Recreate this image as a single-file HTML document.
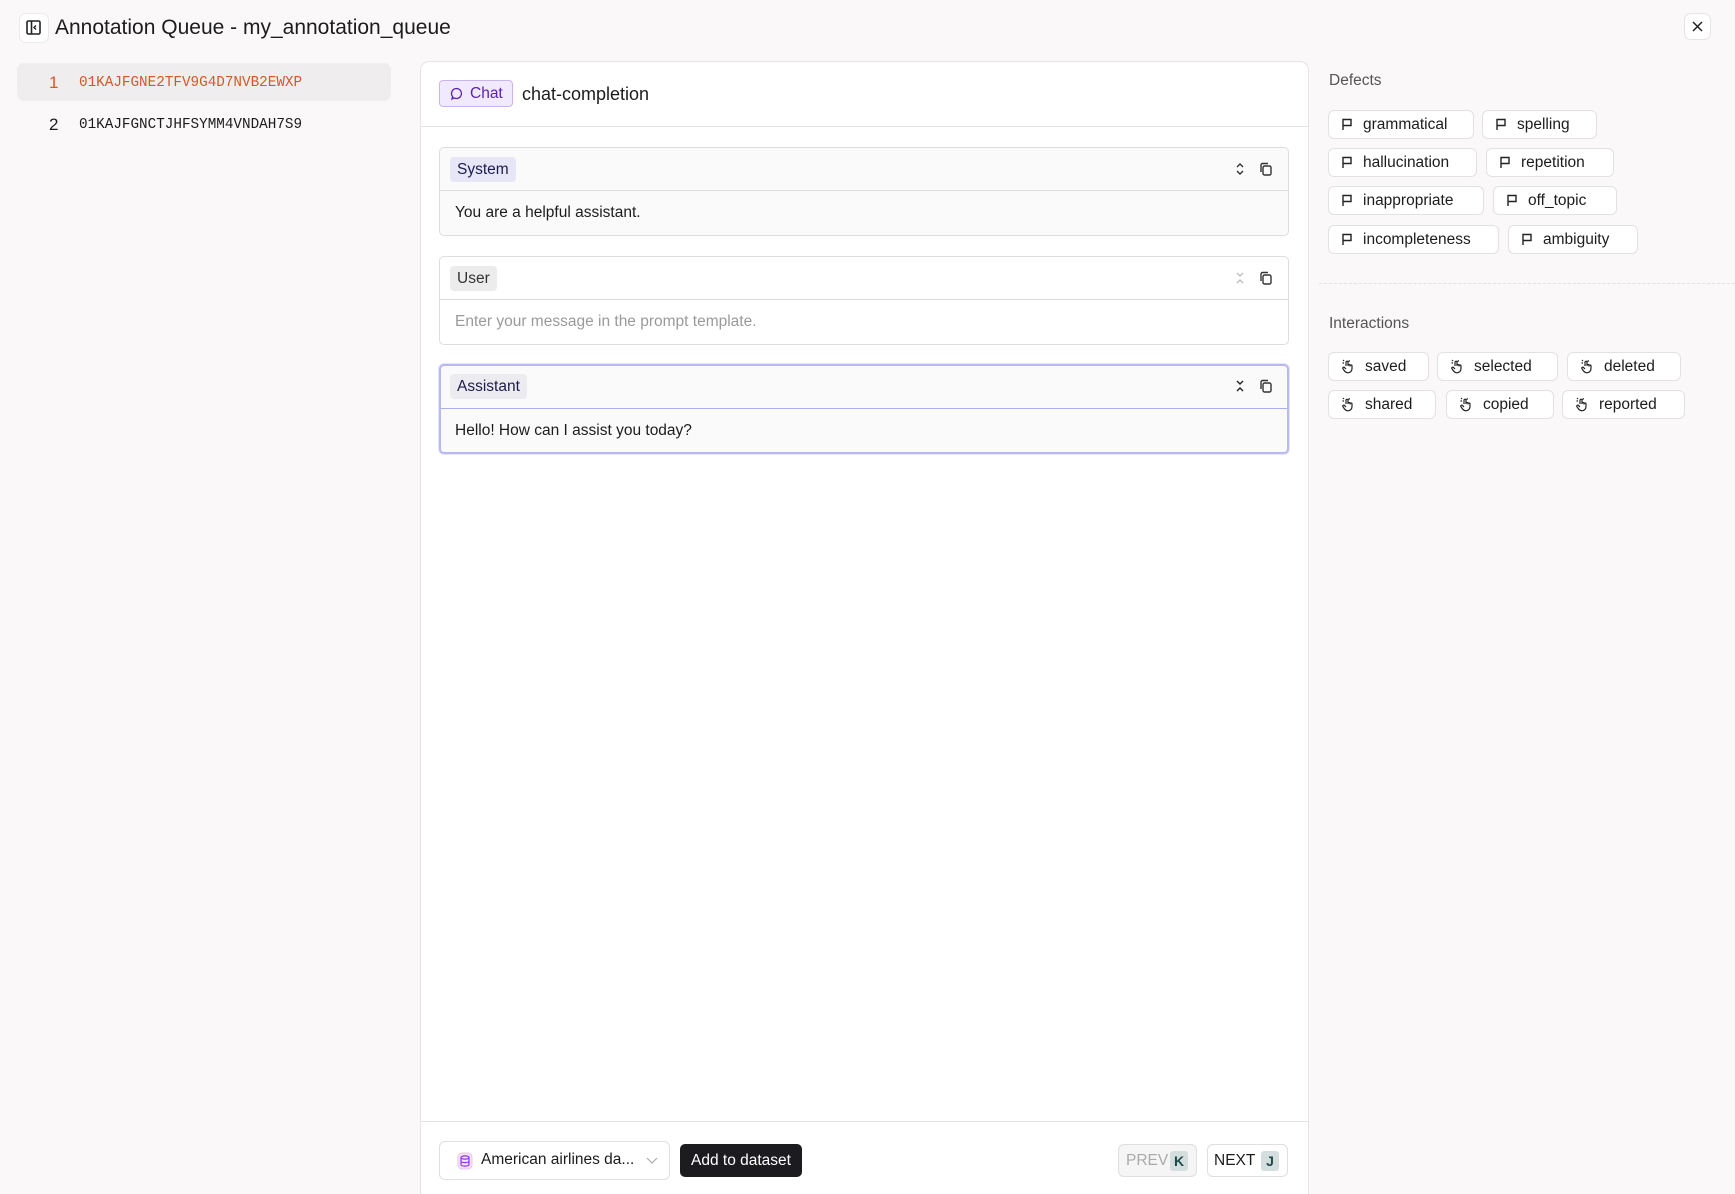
<!DOCTYPE html>
<html style="overflow:hidden;height:1194px"><head><meta charset="utf-8"><style>
*{box-sizing:border-box;margin:0;padding:0}
body{width:1735px;height:1194px;background:#faf8f8;font-family:"Liberation Sans",sans-serif;color:#1c1c1e;position:relative;overflow:hidden}
.a{position:absolute}
.chip{position:absolute;height:29px;border:1px solid #e3e1e1;border-radius:6px;background:#fff;font-size:15.5px;display:flex;align-items:center;padding-left:12px;gap:10px;color:#1c1c1e}
.blk{position:absolute;left:439px;width:850px;border:1px solid #dedcdc;border-radius:5px;background:#fafafa}
.bh{height:43px;border-bottom:1px solid #dedcdc;position:relative}
.tag{position:absolute;left:10px;top:9px;height:25px;padding:0 7px;border-radius:4px;font-size:15.5px;line-height:25px}
.bb{padding-left:15px;font-size:15.5px;line-height:44px}
.ic2{position:absolute;top:14px}
</style></head><body>

<div class="a" style="left:19px;top:13px;width:30px;height:30px;border:1px solid #eceaea;border-radius:7px;background:#fff"></div>
<svg class="a" style="left:24px;top:19px" width="20" height="18" viewBox="0 0 20 18"><rect x="3" y="2" width="13" height="13" rx="1.5" fill="none" stroke="#222" stroke-width="1.6"/><line x1="7.5" y1="2" x2="7.5" y2="15" stroke="#222" stroke-width="1.6"/><path d="M12 6.5 L10 8.5 L12 10.5" fill="none" stroke="#222" stroke-width="1.4"/></svg>
<div class="a" style="left:55px;top:15px;font-size:21px;line-height:26px;color:#1c1c1e">Annotation Queue - my_annotation_queue</div>

<div class="a" style="left:1684px;top:13px;width:27px;height:27px;border:1px solid #e6e4e4;border-radius:7px;background:#fff"></div>
<svg class="a" style="left:1690px;top:19px" width="15" height="15" viewBox="0 0 15 15"><path d="M3 3L12 12M12 3L3 12" stroke="#222" stroke-width="1.5"/></svg>

<div class="a" style="left:17px;top:63px;width:374px;height:38px;background:#efeded;border-radius:7px"></div>
<div class="a" style="left:49px;top:73px;font-size:17px;color:#d4582b">1</div>
<div class="a" style="left:79px;top:75px;font-family:'Liberation Mono',monospace;font-size:14.3px;color:#d4582b">01KAJFGNE2TFV9G4D7NVB2EWXP</div>
<div class="a" style="left:49px;top:115px;font-size:17px;color:#1c1c1e">2</div>
<div class="a" style="left:79px;top:117px;font-family:'Liberation Mono',monospace;font-size:14.3px;color:#1c1c1e">01KAJFGNCTJHFSYMM4VNDAH7S9</div>

<div class="a" style="left:420px;top:61px;width:889px;height:1133px;background:#fff;border:1px solid #e6e4e4;border-bottom:none;border-radius:9px 9px 0 0"></div>
<div class="a" style="left:421px;top:126px;width:887px;height:1px;background:#e6e4e4"></div>
<div class="a" style="left:439px;top:80px;width:74px;height:27px;border:1px solid #c9b5ee;background:#f1e9fd;border-radius:4px;color:#5b21b6;font-size:15.5px;line-height:25px;padding-left:30px">Chat</div>
<svg class="a" style="left:450px;top:87px" width="13" height="14" viewBox="0 0 13 14"><path d="M6.5 1.5a5 5 0 1 1 -2.6 9.3 L2 12 2.6 9.6A5 5 0 0 1 6.5 1.5z" fill="none" stroke="#5b21b6" stroke-width="1.3"/></svg>
<div class="a" style="left:522px;top:82px;font-size:18px;line-height:24px">chat-completion</div>

<div class="blk" style="top:147px;height:89px">
 <div class="bh"><div class="tag" style="background:#e6e6f7;color:#1e1b4b">System</div>
 <svg class="ic2" style="left:795px" width="10" height="14" viewBox="0 0 10 14"><path d="M2 5L5 2 8 5M2 9L5 12 8 9" fill="none" stroke="#333" stroke-width="1.4"/></svg>
 <svg class="ic2" style="left:819px" width="14" height="14" viewBox="0 0 14 14"><rect x="4" y="4" width="8" height="9" rx="1.5" fill="none" stroke="#333" stroke-width="1.4"/><path d="M2 10V3a1.5 1.5 0 0 1 1.5-1.5H9" fill="none" stroke="#333" stroke-width="1.4"/></svg></div>
 <div class="bb" style="color:#1c1c1e">You are a helpful assistant.</div>
</div>

<div class="blk" style="top:256px;height:89px;background:#fff">
 <div class="bh"><div class="tag" style="background:#ececec;color:#333">User</div>
 <svg class="ic2" style="left:795px" width="10" height="14" viewBox="0 0 10 14"><path d="M2 2L5 5 8 2M2 12L5 9 8 12" fill="none" stroke="#bbb" stroke-width="1.3"/></svg>
 <svg class="ic2" style="left:819px" width="14" height="14" viewBox="0 0 14 14"><rect x="4" y="4" width="8" height="9" rx="1.5" fill="none" stroke="#333" stroke-width="1.4"/><path d="M2 10V3a1.5 1.5 0 0 1 1.5-1.5H9" fill="none" stroke="#333" stroke-width="1.4"/></svg></div>
 <div class="bb" style="color:#9a9a9a">Enter your message in the prompt template.</div>
</div>

<div class="blk" style="top:364px;height:90px;border:2px solid #b9b8ef;box-shadow:0 0 0 1px #e5e4fb">
 <div class="bh" style="border-bottom-color:#aeb0ea"><div class="tag" style="background:#ececf0;color:#1e1b4b;left:9px;top:8px">Assistant</div>
 <svg class="ic2" style="left:794px;top:13px" width="10" height="14" viewBox="0 0 10 14"><path d="M2 2L5 5 8 2M2 12L5 9 8 12" fill="none" stroke="#222" stroke-width="1.4"/></svg>
 <svg class="ic2" style="left:818px;top:13px" width="14" height="14" viewBox="0 0 14 14"><rect x="4" y="4" width="8" height="9" rx="1.5" fill="none" stroke="#333" stroke-width="1.4"/><path d="M2 10V3a1.5 1.5 0 0 1 1.5-1.5H9" fill="none" stroke="#333" stroke-width="1.4"/></svg></div>
 <div class="bb" style="padding-left:14px">Hello! How can I assist you today?</div>
</div>

<div class="a" style="left:421px;top:1121px;width:887px;height:1px;background:#e6e4e4"></div>
<div class="a" style="left:439px;top:1141px;width:231px;height:39px;border:1px solid #e0dede;border-radius:6px;background:#fff"></div>
<svg class="a" style="left:457px;top:1152px" width="16" height="18" viewBox="0 0 16 18"><rect x="1" y="1" width="14" height="16" rx="4" fill="#f3e4fb" stroke="#e6c4f4"/><ellipse cx="8" cy="5.5" rx="4" ry="1.6" fill="none" stroke="#9333ea" stroke-width="1.2"/><path d="M4 5.5v7c0 1 1.8 1.6 4 1.6s4-.6 4-1.6v-7M4 9c0 1 1.8 1.6 4 1.6s4-.6 4-1.6" fill="none" stroke="#9333ea" stroke-width="1.2"/></svg>
<div class="a" style="left:481px;top:1151px;font-size:15.5px">American airlines da...</div>
<svg class="a" style="left:646px;top:1157px" width="12" height="8" viewBox="0 0 12 8"><path d="M1 1L6 6 11 1" fill="none" stroke="#aaa" stroke-width="1.2"/></svg>
<div class="a" style="left:680px;top:1144px;width:122px;height:33px;background:#1c1b1f;border-radius:5px;color:#fff;font-size:15.5px;line-height:33px;text-align:center">Add to dataset</div>

<div class="a" style="left:1118px;top:1144px;width:79px;height:33px;border:1px solid #e0dede;border-radius:6px;background:#f5f5f5;font-size:15.5px;line-height:31px;padding-left:7px;color:#aaa">PREV</div>
<div class="a" style="left:1170px;top:1151px;width:18px;height:20px;background:#d5dede;border-radius:3px;color:#1f4a4a;font-size:14px;font-weight:bold;line-height:20px;text-align:center">K</div>
<div class="a" style="left:1207px;top:1144px;width:81px;height:33px;border:1px solid #e0dede;border-radius:6px;background:#fff;font-size:15.5px;line-height:31px;padding-left:6px">NEXT</div>
<div class="a" style="left:1261px;top:1151px;width:18px;height:20px;background:#d5dede;border-radius:3px;color:#1f4a4a;font-size:14px;font-weight:bold;line-height:20px;text-align:center">J</div>

<div class="a" style="left:1329px;top:72px;font-size:15.5px;color:#555">Defects</div>
<div class="a" style="left:1319px;top:283px;width:416px;border-top:1px dashed #e2e0e0"></div>
<div class="a" style="left:1329px;top:315px;font-size:15.5px;color:#555">Interactions</div>

<div id="d"></div>
<script>
var F='<svg width="12" height="13" viewBox="0 0 12 13"><path d="M2 12V1.5h8v6H2" fill="none" stroke="#222" stroke-width="1.4"/></svg>';
var H='<svg width="14" height="15" viewBox="0 0 14 15"><path d="M5 7V3.2a1 1 0 0 1 2 0V7 M7 6.5a1 1 0 0 1 2 0V7.5 M9 7a1 1 0 0 1 2 0v2.5c0 2.5-1.8 4.3-4 4.3-1.8 0-2.8-.8-3.8-2.3L2 9.8a1 1 0 0 1 1.6-1.2L5 10 M3 2L2 1 M7.5 2.5L8.8 1.5 M3 4H1.5" fill="none" stroke="#222" stroke-width="1.2"/></svg>';
var d=[["grammatical",1328,110,146],["spelling",1482,110,115],["hallucination",1328,148,149],["repetition",1486,148,128],["inappropriate",1328,186,156],["off_topic",1493,186,124],["incompleteness",1328,225,171],["ambiguity",1508,225,130]];
var i=[["saved",1328,352,101],["selected",1437,352,121],["deleted",1567,352,114],["shared",1328,390,108],["copied",1446,390,108],["reported",1562,390,123]];
var s='';
d.forEach(function(c){s+='<div class="chip" style="left:'+c[1]+'px;top:'+c[2]+'px;width:'+c[3]+'px">'+F+'<span>'+c[0]+'</span></div>'});
i.forEach(function(c){s+='<div class="chip" style="left:'+c[1]+'px;top:'+c[2]+'px;width:'+c[3]+'px">'+H+'<span>'+c[0]+'</span></div>'});
document.getElementById('d').innerHTML=s;
</script>
</body></html>
